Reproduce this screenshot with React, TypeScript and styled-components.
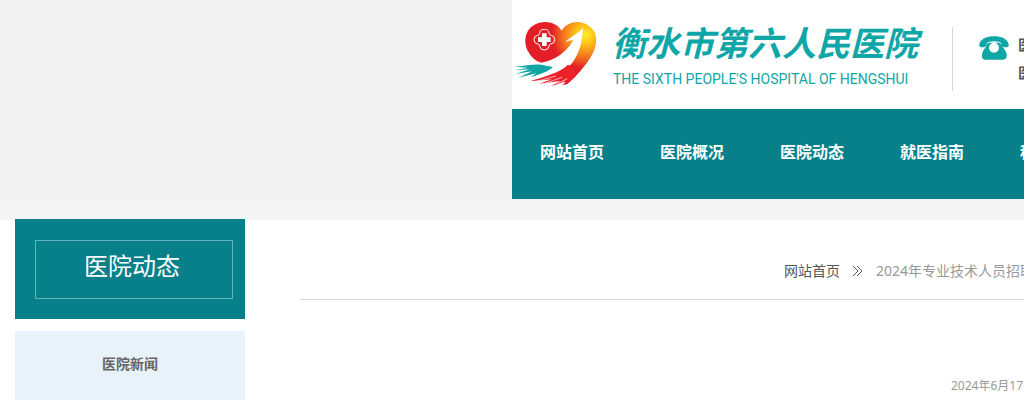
import React from "react";
import styled, { createGlobalStyle } from "styled-components";

const teal = "#08808a";
const logoTeal = "#0fa6a8";

const GlobalStyle = createGlobalStyle`
  *, *::before, *::after { box-sizing: border-box; }
  body {
    margin: 0;
    background: #fff;
    color: #555;
    font-family: "Noto Sans", "Noto Sans CJK SC", sans-serif;
    font-size: 14px;
  }
  h1, p, ul, ol { margin: 0; padding: 0; }
  ul, ol { list-style: none; }
  a { color: inherit; text-decoration: none; }
`;

const Page = styled.div`
  display: flex;
  flex-direction: column;
  min-height: 100vh;
  overflow: hidden;
`;

const Header = styled.header`
  display: grid;
  grid-template-columns: minmax(0, 1fr) minmax(0, 1fr);
  background: #f2f2f2;
`;

const HeaderPanel = styled.div`
  grid-column: 2;
  overflow: hidden;
  background: #fff;
`;

const Brand = styled.div`
  display: flex;
  align-items: flex-start;
  padding: 10px 0 9px;
  white-space: nowrap;
`;

const LogoMark = styled.svg`
  flex: none;
  width: 100px;
  height: 90px;
`;

const HospitalName = styled.div`
  flex: none;
  width: 310px;
  padding-top: 9px;
  color: ${logoTeal};
`;

const ChineseName = styled.h1`
  font: italic 700 34px/46px "Noto Sans CJK SC", sans-serif;
`;

const EnglishName = styled.p`
  padding-left: 1px;
  font: 14px/28px "Roboto", sans-serif;
`;

const Contact = styled.div`
  display: flex;
  flex: none;
  align-items: flex-start;
  gap: 9px;
  height: 64px;
  margin: 17px 0 0 30px;
  padding-left: 26px;
  border-left: 1px solid #d8d8d8;
`;

const PhoneIcon = styled.svg`
  width: 30px;
  height: 24px;
  margin-top: 9px;
`;

const ContactLines = styled.div`
  padding-top: 4px;
  font-weight: 700;
  line-height: 28px;
`;

const Nav = styled.nav`
  background: ${teal};
`;

const NavList = styled.ul`
  display: flex;
`;

const NavItem = styled.li`
  flex: none;
  width: 120px;
  color: #fff;
  font-size: 16px;
  font-weight: 700;
  line-height: 86px;
  padding-bottom: 4px;
  text-align: center;
`;

const Band = styled.div`
  height: 21px;
  background: #f4f4f4;
`;

const Main = styled.main`
  display: flex;
  flex: 1;
  gap: 55px;
  margin-top: -1px;
  padding-left: 15px;
`;

const Sidebar = styled.aside`
  display: flex;
  flex: none;
  flex-direction: column;
  gap: 12px;
  width: 230px;
`;

const SidebarTitle = styled.div`
  padding: 21px 12px 20px 20px;
  background: ${teal};
`;

const SidebarFrame = styled.p`
  padding: 0 4px 8px 0;
  border: 1px solid #62b5c0;
  color: #fff;
  font-size: 24px;
  line-height: 49px;
  text-align: center;
`;

const SidebarMenu = styled.ul`
  flex: 1;
  background: #e7f3f8;
  color: #666;
  font-weight: 700;
  line-height: 66px;
  text-align: center;
`;

const Article = styled.article`
  flex: 1;
  min-width: 0;
  white-space: nowrap;
`;

const Breadcrumb = styled.ol`
  display: flex;
  align-items: center;
  gap: 12px;
  padding: 38px 0 14px 484px;
  border-bottom: 1px solid #dcdcdc;
  line-height: 28px;
`;

const Crumb = styled.li<{ $current?: boolean }>`
  flex: none;
  color: ${({ $current }) => ($current ? "#999" : "#555")};
`;

const Chevrons = styled.svg`
  flex: none;
  width: 12px;
  height: 12px;
`;

const PublishDate = styled.p`
  padding: 76px 0 16px 651px;
  color: #999;
  font-size: 12px;
  line-height: 20px;
`;

const navItems = ["网站首页", "医院概况", "医院动态", "就医指南", "科室导航"];

function Logo() {
  return (
    <LogoMark viewBox="0 0 300 270" aria-hidden="true">
      <defs>
        <radialGradient id="gold" gradientUnits="userSpaceOnUse" cx="220" cy="74" r="102">
          <stop offset="0" stopColor="#ffee2a" />
          <stop offset="0.3" stopColor="#fdbd16" />
          <stop offset="0.65" stopColor="#f4761f" />
          <stop offset="1" stopColor="#e31e26" />
        </radialGradient>
      </defs>
      <path
        d="M149 62 C132 33 92 29 66 45 C36 62 34 102 50 127 C60 145 74 155 88 158 L150 204 L165 223 C194 198 222 166 238 138 C256 108 262 68 230 47 C202 28 166 35 149 62Z"
        fill="url(#gold)"
      />
      <path
        d="M213 53 C200 69 177 79 159 97 Q172 91 184 90 C166 124 130 152 88 158 L42 184 L54 214 C110 207 150 196 178 162 C198 136 210 108 213 53Z"
        fill="#fff"
      />
      <path
        d="M54 214 C98 198 138 192 168 164 L186 172 L190 200 L165 223 L151 225 L166 211 C150 218 136 224 118 227 L145 213 L82 221 L120 208Z"
        fill="#ee202a"
      />
      <path
        d="M70 215 L132 198 M100 220 L150 202 M134 222 L166 206"
        fill="none"
        stroke="#fff"
        strokeWidth="2"
      />
      <path
        d="M8 170 C45 167 70 161 92 165 L123 171 C108 185 88 192 57 201 L72 190 L20 203 L60 184 L10 192 L53 178 L7 181 L48 173Z"
        fill="#13a5a6"
      />
      <path
        d="M83 70 Q83 58 97 58 Q111 58 111 70 Q112 75 118 76 Q128 78 128 89 Q128 101 116 102 Q111 103 111 109 Q109 120 97 120 Q85 120 83 109 Q83 103 77 102 Q66 100 66 89 Q66 77 77 76 Q83 75 83 70Z"
        fill="none"
        stroke="#fff"
        strokeWidth="3"
      />
      <path d="M90 70H104V82H116V96H104V108H90V96H78V82H90Z" fill="#fff" />
    </LogoMark>
  );
}

export default function App() {
  return (
    <>
      <GlobalStyle />
      <Page>
        <Header>
          <HeaderPanel>
            <Brand>
              <Logo />
              <HospitalName>
                <ChineseName>衡水市第六人民医院</ChineseName>
                <EnglishName>THE SIXTH PEOPLE'S HOSPITAL OF HENGSHUI</EnglishName>
              </HospitalName>
              <Contact>
                <PhoneIcon viewBox="0 0 90 72" fill={logoTeal} aria-hidden="true">
                  <path d="M1 25 C5 8 24 1 45 1 C66 1 85 8 89 25 Q91 34 80 34 Q70 34 68 26 Q67 18 58 17 Q45 14 32 17 Q23 18 22 26 Q20 34 10 34 Q-1 34 1 25Z" />
                  <path
                    fillRule="evenodd"
                    d="M29 20 H61 Q68 22 71 32 L80 46 Q84 53 83 61 Q82 71 72 71 H18 Q9 71 9 61 Q8 53 12 46 L20 32 Q23 22 29 20Z M45 20 A15 15 0 1 0 45 50 A15 15 0 1 0 45 20Z"
                  />
                </PhoneIcon>
                <ContactLines>
                  <p>医院电话</p>
                  <p>医院急诊</p>
                </ContactLines>
              </Contact>
            </Brand>
            <Nav>
              <NavList>
                {navItems.map((item) => (
                  <NavItem key={item}>
                    <a href="#">{item}</a>
                  </NavItem>
                ))}
              </NavList>
            </Nav>
          </HeaderPanel>
        </Header>
        <Band />
        <Main>
          <Sidebar>
            <SidebarTitle>
              <SidebarFrame>医院动态</SidebarFrame>
            </SidebarTitle>
            <SidebarMenu>
              <li>
                <a href="#">医院新闻</a>
              </li>
            </SidebarMenu>
          </Sidebar>
          <Article>
            <Breadcrumb>
              <Crumb>
                <a href="#">网站首页</a>
              </Crumb>
              <Chevrons viewBox="0 0 12 12" fill="none" stroke="#555" aria-hidden="true">
                <path d="M1 1 L6 6 L1 11 M5 1 L10 6 L5 11" />
              </Chevrons>
              <Crumb $current>2024年专业技术人员招聘公告</Crumb>
            </Breadcrumb>
            <PublishDate>2024年6月17日</PublishDate>
          </Article>
        </Main>
      </Page>
    </>
  );
}
